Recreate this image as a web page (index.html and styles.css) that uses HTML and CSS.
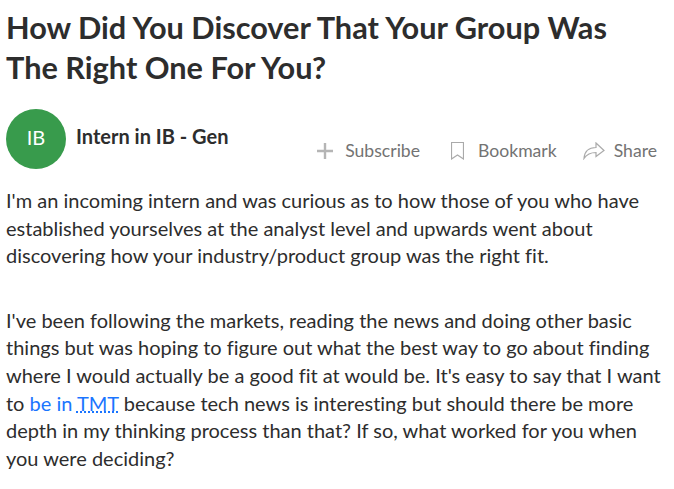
FILE: index.html
```html
<!doctype html>
<html lang="en">
  <head>
    <meta charset="UTF-8" />
    <meta name="viewport" content="width=device-width, initial-scale=1.0" />
    <title>How Did You Discover That Your Group Was The Right One For You?</title>
    <link rel="stylesheet" href="styles.css">
  </head>
  <body>
    <article class="post">
      <h1>How Did You Discover That Your Group Was The Right One For You?</h1>
      <header class="meta">
        <span class="avatar">IB</span>
        <span class="author">Intern in IB - Gen</span>
        <nav class="actions">
          <a class="action subscribe">
            <svg width="16" height="16" viewBox="0 0 16 16"><path d="M8 0v16M0 8h16" /></svg>
            Subscribe
          </a>
          <a class="action">
            <svg width="13" height="18" viewBox="0 0 13 18"><path d="M.5 .5h12v16.500l-6-4-6 4z" /></svg>
            Bookmark
          </a>
          <a class="action share">
            <svg width="22" height="18" viewBox="0 0 22 18"><path d="M13 1l8 7.500-8 6v-4C7 10.500 4 12 1 16.500c.5-7 4-11 12-11z" /></svg>
            Share
          </a>
        </nav>
      </header>
      <p>I'm an incoming intern and was curious as to how those of you who have established yourselves at the analyst level and upwards went about discovering how your industry/product group was the right fit.</p>
      <p>I've been following the markets, reading the news and doing other basic things but was hoping to figure out what the best way to go about finding where I would actually be a good fit at would be. It's easy to say that I want to <a class="link">be in <abbr>TMT</abbr></a> because tech news is interesting but should there be more depth in my thinking process than that? If so, what worked for you when you were deciding?</p>
    </article>
  </body>
</html>
```

FILE: styles.css
```css
* {
  box-sizing: border-box;
}

body {
  margin: 0;
  background: #fff;
  color: #2d2d2d;
  font-family: Lato, "Open Sans", sans-serif;
  font-variant-ligatures: none;
}

.post {
  padding: 8px 6px 0;
}

h1 {
  margin: 0;
  padding-right: 30px;
  font-size: 30.7px;
  line-height: 40px;
  font-weight: 700;
}

.meta {
  display: flex;
  height: 60px;
  margin: 21px 0 18px;
}

.avatar {
  width: 60px;
  height: 60px;
  border-radius: 50%;
  background: #389b4c;
  color: #fff;
  font-size: 20px;
  line-height: 57px;
  text-align: center;
}

.author {
  margin-left: 10px;
  font-size: 20px;
  line-height: 55px;
  font-weight: 700;
}

.actions {
  display: flex;
  gap: 30px;
  margin-left: auto;
  padding: 29px 11px 0 0;
}

.action {
  display: flex;
  align-items: center;
  gap: 14px;
  height: 24px;
  color: #737373;
  font-size: 17.6px;
}

.subscribe {
  gap: 12px;
  margin-right: 1px;
}

.share {
  gap: 9px;
  margin-left: -4px;
}

.action svg {
  margin-top: 2px;
  fill: none;
  stroke: #aaa;
  stroke-width: 1.2;
}

.subscribe svg {
  stroke: #b5b5b5;
  stroke-width: 2.4;
}

p {
  margin: 0 0 37px;
  font-size: 20px;
  line-height: 27.6px;
}

.link {
  color: #1a75ff;
}

abbr {
  text-decoration: underline dotted;
}
```
